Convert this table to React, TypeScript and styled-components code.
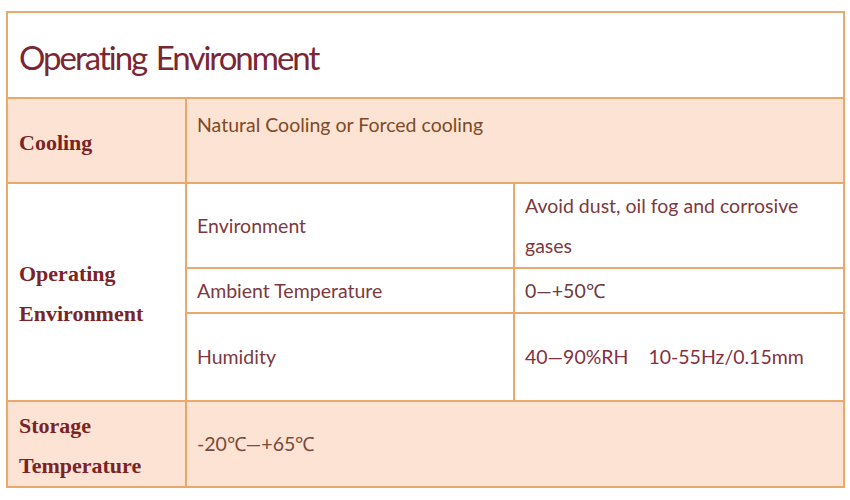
import styled, { createGlobalStyle } from "styled-components";

const GlobalStyle = createGlobalStyle`
  html, body {
    margin: 0;
    padding: 0;
    background: #ffffff;
  }
`;

const Page = styled.div`
  padding: 11px 0 0 6px;
  width: 850px;
  height: 500px;
  box-sizing: border-box;
`;

const Table = styled.table`
  width: 837px;
  border-collapse: collapse;
  table-layout: fixed;
  font-family: Lato, "Liberation Sans", sans-serif;
  color: #7c3a3e;

  td {
    border: 2px solid #eaa86c;
    box-sizing: border-box;
  }
`;

const Row = styled.tr<{ $shade?: boolean; $h: number }>`
  height: ${({ $h }) => $h}px;
  background: ${({ $shade }) => ($shade ? "#fce3d3" : "#ffffff")};
`;

const TitleCell = styled.td`
  padding: 4px 0 0 11px;
  font-size: 33px;
  font-weight: 400;
  letter-spacing: -2px;
  word-spacing: 3px;
  color: #7a2733;
  vertical-align: middle;
`;

const HeadCell = styled.td`
  padding: 4px 8px 0 11px;
  font-family: "Liberation Serif", "Times New Roman", serif;
  font-weight: 700;
  font-size: 22px;
  line-height: 40px;
  color: #7a2427;
  vertical-align: middle;
`;

const Cell = styled.td<{ $top?: boolean; $tone?: string }>`
  padding: ${({ $top }) => ($top ? "6px 10px 0 10px" : "0 10px")};
  font-size: 19.5px;
  line-height: 40px;
  vertical-align: ${({ $top }) => ($top ? "top" : "middle")};
  color: ${({ $tone }) => $tone ?? "#7c3a3e"};
`;

export default function App() {
  return (
    <Page>
      <GlobalStyle />
      <Table>
        <colgroup>
          <col style={{ width: 179 }} />
          <col style={{ width: 328 }} />
          <col style={{ width: 330 }} />
        </colgroup>
        <tbody>
          <Row $h={86}>
            <TitleCell colSpan={3}>Operating Environment</TitleCell>
          </Row>
          <Row $h={85} $shade>
            <HeadCell>Cooling</HeadCell>
            <Cell colSpan={2} $top $tone="#7e4a26">
              Natural Cooling or Forced cooling
            </Cell>
          </Row>
          <Row $h={85}>
            <HeadCell rowSpan={3}>
              Operating
              <br />
              Environment
            </HeadCell>
            <Cell>Environment</Cell>
            <Cell>
              Avoid dust, oil fog and corrosive
              <br />
              gases
            </Cell>
          </Row>
          <Row $h={45}>
            <Cell>Ambient Temperature</Cell>
            <Cell $tone="#6e3a38">0—+50℃</Cell>
          </Row>
          <Row $h={88}>
            <Cell>Humidity</Cell>
            <Cell $tone="#84303f">40—90%RH&nbsp;&nbsp;&nbsp;&nbsp;10-55Hz/0.15mm</Cell>
          </Row>
          <Row $h={86} $shade>
            <HeadCell>
              Storage
              <br />
              Temperature
            </HeadCell>
            <Cell colSpan={2} $tone="#7a4a3a">
              -20℃—+65℃
            </Cell>
          </Row>
        </tbody>
      </Table>
    </Page>
  );
}
